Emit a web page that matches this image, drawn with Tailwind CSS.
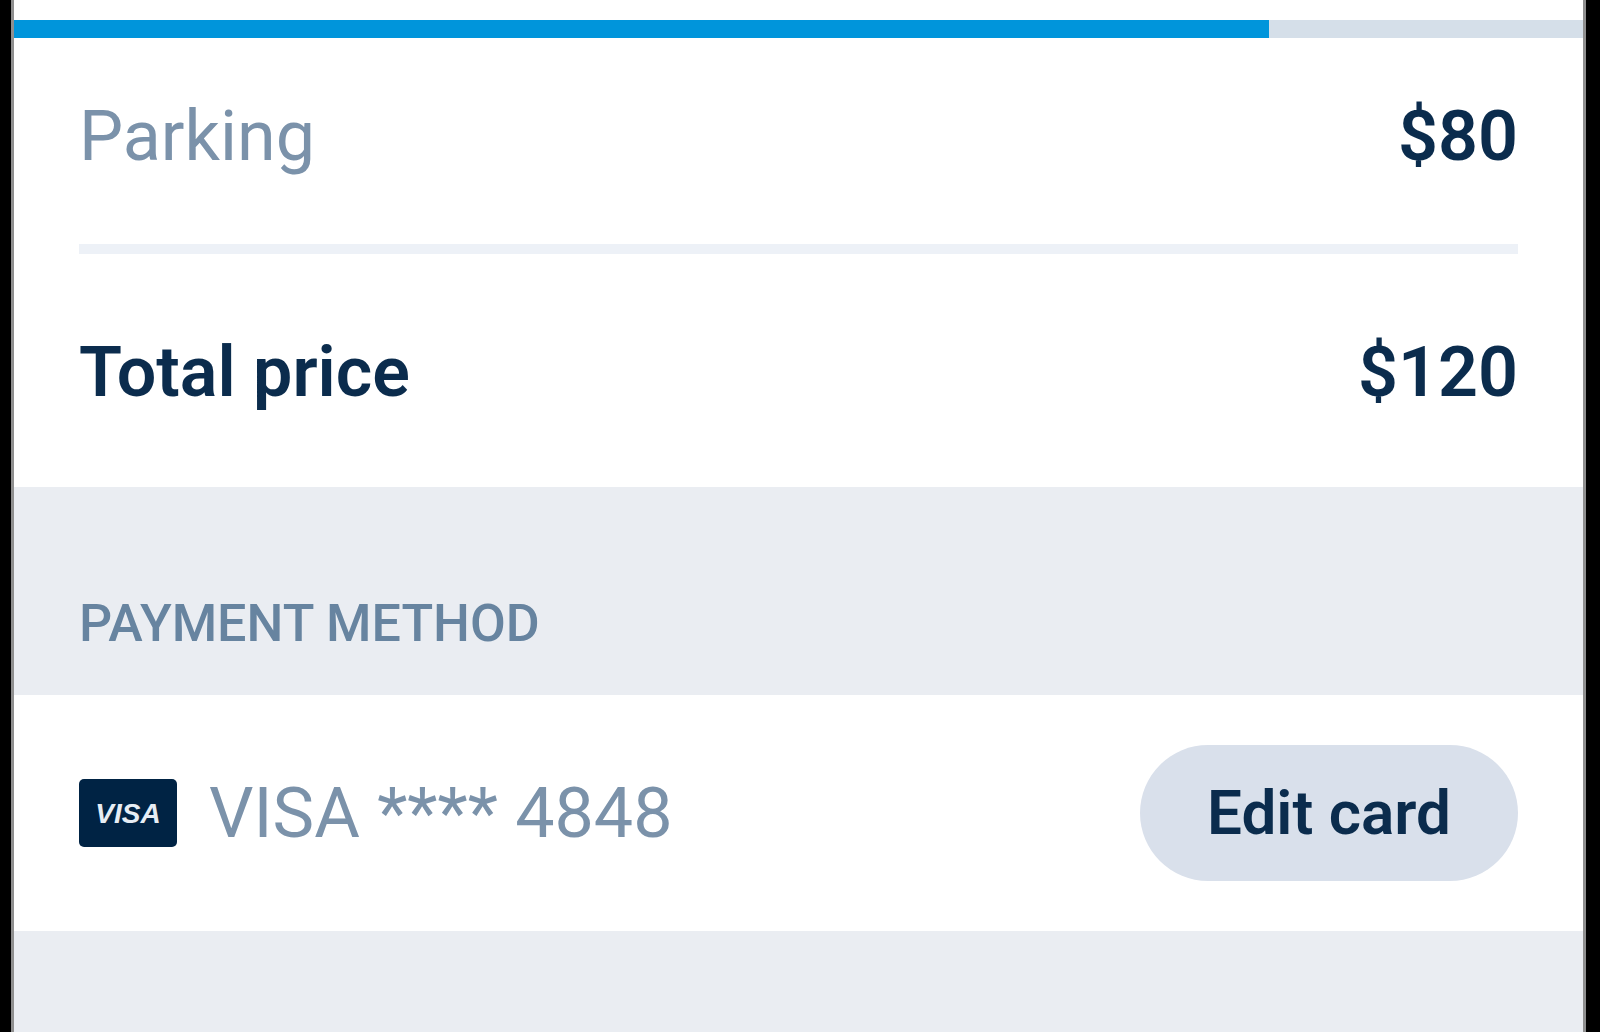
<!DOCTYPE html>
<html lang="en">
<head>
  <meta charset="UTF-8" />
  <meta name="viewport" content="width=device-width, initial-scale=1.0" />
  <title>Checkout</title>
  <script src="https://cdn.jsdelivr.net/npm/@tailwindcss/browser@4"></script>
</head>
<body class="bg-black pl-[11px] pr-[14px] font-[Roboto,Inter,sans-serif]">
  <main class="min-h-screen bg-[#eaedf2] border-x-3 border-[#8f8f8f] text-[#0b2c4d]">

    <!-- Progress -->
    <div class="bg-white pt-5">
      <div class="h-[18px] bg-[#d5dfe9]" role="progressbar" aria-label="Checkout progress" aria-valuenow="80" aria-valuemin="0" aria-valuemax="100">
        <div class="h-full bg-[#0095db]" style="width: 80%"></div>
      </div>
    </div>

    <!-- Price summary -->
    <dl class="bg-white px-[65px] text-[70px] leading-[80px]">
      <div class="flex justify-between pt-[58px] pb-[68px] border-b-10 border-[#edf1f7]">
        <dt class="text-[#7b92aa]">Parking</dt>
        <dd class="font-semibold">$80</dd>
      </div>
      <div class="flex justify-between pt-[78px] pb-[75px] font-semibold">
        <dt>Total price</dt>
        <dd>$120</dd>
      </div>
    </dl>

    <!-- Payment method -->
    <h2 class="px-[65px] pt-[107px] pb-[41px] text-[52px] leading-[60px] font-medium text-[#6784a0]">PAYMENT METHOD</h2>
    <div class="flex items-center justify-between bg-white px-[65px] py-[50px]">
      <div class="flex items-center gap-8">
        <svg class="w-[98px] h-[68px]" viewBox="0 0 98 68" role="img" aria-label="Visa">
          <rect width="98" height="68" rx="5" fill="#002344" />
          <text x="49" y="44" text-anchor="middle" font-family="Liberation Sans, sans-serif" font-size="28" font-weight="700" font-style="italic" fill="#e6edf4">VISA</text>
        </svg>
        <span class="text-[70px] leading-[80px] text-[#7b92aa]">VISA **** 4848</span>
      </div>
      <button type="button" class="rounded-full bg-[#d9e0eb] px-[67px] py-7 text-[62px] leading-[80px] font-semibold cursor-pointer hover:bg-[#cdd6e5]">Edit card</button>
    </div>

  </main>
</body>
</html>
